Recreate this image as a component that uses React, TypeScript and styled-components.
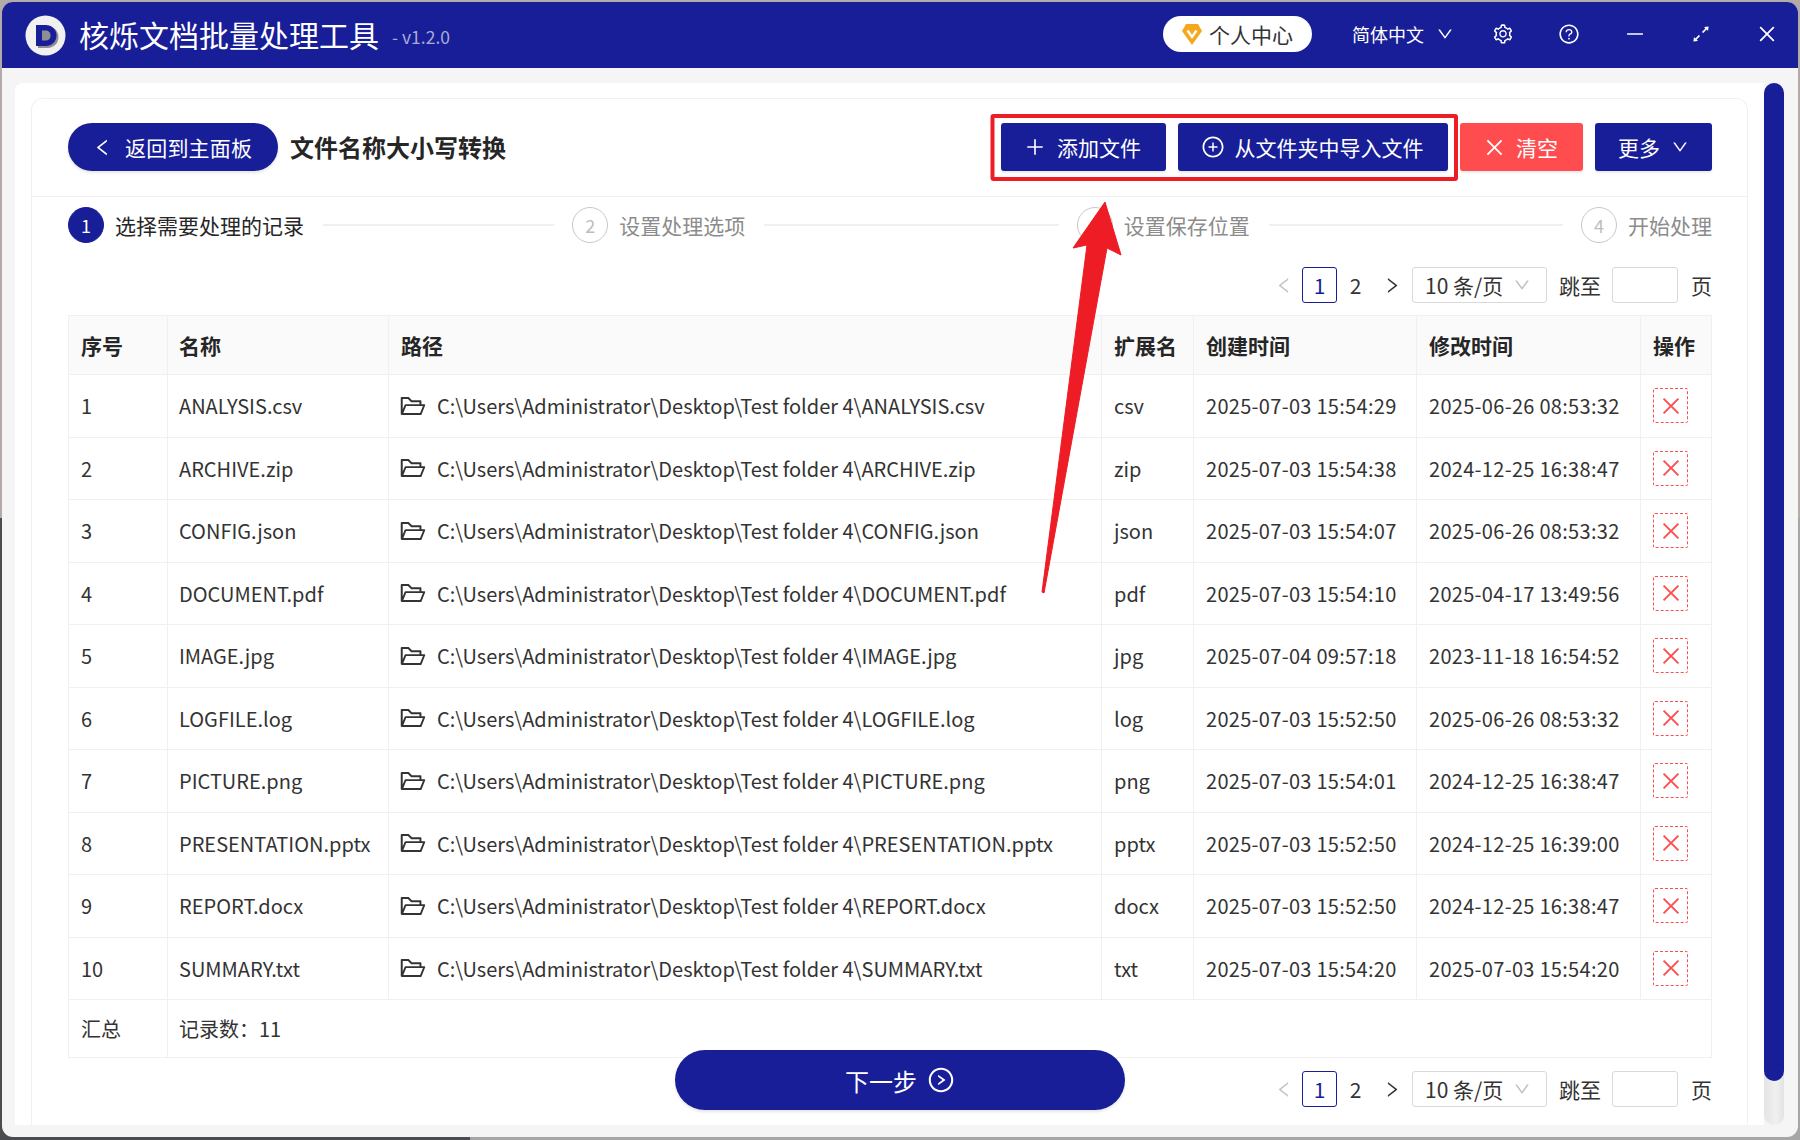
import React from "react";
import styled, { createGlobalStyle } from "styled-components";
import {
  AiOutlineArrowsAlt,
  AiOutlineClose,
  AiOutlineDown,
  AiOutlineFolderOpen,
  AiOutlineLeft,
  AiOutlineMinus,
  AiOutlinePlus,
  AiOutlinePlusCircle,
  AiOutlineQuestionCircle,
  AiOutlineRight,
  AiOutlineRightCircle,
  AiOutlineSetting,
} from "react-icons/ai";

const BLUE = "#181e97";
const LINE = "#f0f0f0";
const FONT = `"Noto Sans CJK SC", "Noto Sans", sans-serif`;

const Global = createGlobalStyle`
  html, body { margin: 0; padding: 0; }
  body {
    width: 1800px;
    height: 1140px;
    overflow: hidden;
    font-family: ${FONT};
    background:
      linear-gradient(90deg, #4a4c50 0 470px, #a6a6a6 470px) 0 518px / 100% 622px no-repeat,
      #b4aaa8;
  }
  * { box-sizing: border-box; }
`;

const Page = styled.div`
  position: relative;
  width: 1800px;
  height: 1140px;
  padding: 2px;
`;

const AppWindow = styled.div`
  width: 1796px;
  height: 1135px;
  border-radius: 11px;
  overflow: hidden;
  background: #f5f5f5;
  display: flex;
  flex-direction: column;
`;

const TitleBar = styled.header`
  height: 66px;
  flex: none;
  background: ${BLUE};
  color: #fff;
  display: flex;
  align-items: center;
  padding-left: 23px;
  padding-bottom: 2px;
`;

const Logo = styled.svg`
  width: 41px;
  height: 41px;
  flex: none;
  margin-top: 2px;
`;

const AppName = styled.div`
  margin-left: 13px;
  font-size: 30px;
  line-height: 40px;
  letter-spacing: 0;
  color: #fff;
`;

const Version = styled.div`
  margin-left: 13px;
  margin-top: 4px;
  font-size: 17.5px;
  color: #a9acd6;
`;

const Pill = styled.div`
  margin-left: auto;
  width: 149px;
  height: 36px;
  border-radius: 18px;
  background: #fff;
  color: #333;
  display: flex;
  align-items: center;
  padding-left: 19px;
  gap: 7px;
  font-size: 21px;
  line-height: 36px;
`;

const Lang = styled.div`
  margin-left: 40px;
  margin-right: 16px;
  display: flex;
  align-items: center;
  gap: 12px;
  font-size: 18px;
  color: #fff;
`;

const WinIcon = styled.div`
  width: 66px;
  height: 40px;
  display: flex;
  align-items: center;
  justify-content: center;
  font-size: 22px;
`;

const WinIcons = styled.div`
  display: flex;
  margin-right: -2px;
`;

const Body = styled.div`
  flex: 1;
  display: flex;
  padding: 15px 14px 12px 13px;
  min-height: 0;
`;

const Panel = styled.main`
  flex: 1;
  background: #fff;
  padding: 15px 16px 0;
  border-radius: 8px 0 0 0;
  min-width: 0;
`;

const ScrollTrack = styled.div`
  width: 20px;
  flex: none;
  border-radius: 10px;
  background: linear-gradient(90deg, #e4e4e4, #f0f0f0 60%, #e2e2e2);
`;

const ScrollThumb = styled.div`
  height: 998px;
  border-radius: 10px;
  background: ${BLUE};
`;

const Card = styled.section`
  height: 100%;
  border: 1px solid ${LINE};
  border-bottom: 0;
  border-radius: 12px 12px 0 0;
  display: flex;
  flex-direction: column;
`;

const Head = styled.div`
  height: 98px;
  flex: none;
  border-bottom: 1px solid ${LINE};
  display: flex;
  align-items: flex-start;
  padding: 24px 35px 0 36px;
`;

const BackButton = styled.button`
  width: 210px;
  height: 48px;
  border: 0;
  border-radius: 24px;
  background: ${BLUE};
  color: #fff;
  font-family: inherit;
  font-size: 21px;
  letter-spacing: 0.2px;
  display: flex;
  align-items: center;
  padding: 0 0 0 24px;
  gap: 12px;
  box-shadow: 0 2px 3px rgba(0, 0, 0, 0.1);
`;

const PageTitle = styled.h1`
  margin: 0 0 0 12px;
  font-size: 24px;
  line-height: 48px;
  font-weight: 700;
  color: #262626;
`;

const Toolbar = styled.div`
  margin-left: auto;
  display: flex;
  gap: 12px;
`;

const ToolButton = styled.button<{ $w: number; $danger?: boolean; $gap?: number; $nudge?: boolean }>`
  width: ${(p) => p.$w}px;
  height: 48px;
  border: 0;
  border-radius: 3px;
  background: ${(p) => (p.$danger ? "#ff4d4f" : BLUE)};
  color: #fff;
  font-family: inherit;
  font-size: 21px;
  display: flex;
  align-items: center;
  justify-content: center;
  gap: ${(p) => p.$gap ?? 12}px;
  padding: 0 ${(p) => (p.$nudge ? 2 : 0)}px 0 0;
  box-shadow: 0 2px 2px rgba(0, 0, 0, 0.08);
`;

const Content = styled.div`
  flex: 1;
  padding: 10px 35px 0 36px;
  display: flex;
  flex-direction: column;
`;

const Steps = styled.ol`
  list-style: none;
  margin: 0;
  padding: 0;
  display: flex;
  height: 36px;
  flex: none;
`;

const Step = styled.li<{ $last?: boolean }>`
  flex: ${(p) => (p.$last ? "none" : 1)};
  display: flex;
  align-items: center;
`;

const StepCircle = styled.div<{ $active?: boolean }>`
  width: 36px;
  height: 36px;
  border-radius: 50%;
  flex: none;
  display: flex;
  align-items: center;
  justify-content: center;
  font-size: 18px;
  border: 1px solid ${(p) => (p.$active ? BLUE : "#c8c8c8")};
  background: ${(p) => (p.$active ? BLUE : "#fff")};
  color: ${(p) => (p.$active ? "#fff" : "#bdbdbd")};
`;

const StepLabel = styled.div<{ $active?: boolean }>`
  margin-left: 11px;
  font-size: 21px;
  white-space: nowrap;
  color: ${(p) => (p.$active ? "#262626" : "#8c8c8c")};
`;

const StepLine = styled.div`
  flex: 1;
  height: 2px;
  margin: 0 18px 0 19px;
  background: ${LINE};
`;

const Pager = styled.nav`
  display: flex;
  align-items: center;
  justify-content: flex-end;
  height: 36px;
  font-size: 21px;
  color: #333;
`;

const TopPager = styled(Pager)`
  margin-top: 24px;
  flex: none;
`;

const PageArrow = styled.div<{ $off?: boolean; $after?: boolean }>`
  width: 20px;
  margin-left: ${(p) => (p.$after ? 9 : 0)}px;
  display: flex;
  justify-content: center;
  font-size: 21px;
  color: ${(p) => (p.$off ? "#c4c4c4" : "#333")};
`;

const PageNum = styled.div<{ $on?: boolean }>`
  width: 35px;
  height: 36px;
  margin-left: ${(p) => (p.$on ? 8 : 1)}px;
  border-radius: 3px;
  border: 1px solid ${(p) => (p.$on ? BLUE : "transparent")};
  display: flex;
  align-items: center;
  justify-content: center;
  font-size: 21px;
  color: ${(p) => (p.$on ? BLUE : "#333")};
`;

const SizeSelect = styled.div`
  width: 135px;
  height: 36px;
  margin-left: 10px;
  border: 1px solid #d9d9d9;
  border-radius: 3px;
  display: flex;
  align-items: center;
  justify-content: space-between;
  padding: 0 15px 0 12px;
  font-size: 21px;
  color: #333;
  svg {
    color: #bfbfbf;
    font-size: 18px;
  }
`;

const JumpLabel = styled.div`
  margin: 0 11px 0 12px;
  font-size: 21px;
`;

const JumpInput = styled.div`
  width: 66px;
  height: 36px;
  border: 1px solid #d9d9d9;
  border-radius: 3px;
`;

const PageWord = styled.div`
  margin-left: 13px;
  font-size: 21px;
`;

const Table = styled.table`
  margin-top: 12px;
  width: 1644px;
  table-layout: fixed;
  border-collapse: separate;
  border-spacing: 0;
  border-top: 1px solid ${LINE};
  border-left: 1px solid ${LINE};
  font-size: 20px;
  color: #333;
  flex: none;
`;

const Th = styled.th<{ $tight?: boolean }>`
  height: 59px;
  padding: 0 0 0 ${(p) => (p.$tight ? 11 : 12)}px;
  background: #fafafa;
  text-align: left;
  font-weight: 700;
  font-size: 21px;
  color: #262626;
  border-right: 1px solid ${LINE};
  border-bottom: 1px solid ${LINE};
  white-space: nowrap;
`;

const Td = styled.td<{ $tight?: boolean }>`
  height: 62.5px;
  padding: 0 0 0 ${(p) => (p.$tight ? 11 : 12)}px;
  border-right: 1px solid ${LINE};
  border-bottom: 1px solid ${LINE};
  white-space: nowrap;
`;

const DateCell = styled(Td)`
  letter-spacing: 0.3px;
`;

const SummaryCell = styled(Td)`
  height: 58px;
`;

const PathCell = styled.div`
  display: flex;
  align-items: center;
  gap: 10px;
  margin-left: -2px;
  svg {
    font-size: 28px;
    color: #333;
    flex: none;
  }
`;

const DeleteButton = styled.div`
  width: 35px;
  height: 35px;
  border: 1px dashed #ff4d4f;
  border-radius: 2px;
  color: #ff4d4f;
  display: flex;
  align-items: center;
  justify-content: center;
  font-size: 24px;
`;

const Footer = styled.div`
  position: relative;
  margin-top: 13px;
`;

const NextButton = styled.button`
  position: absolute;
  left: 607px;
  top: -21px;
  width: 450px;
  height: 60px;
  border: 0;
  border-radius: 30px;
  background: ${BLUE};
  color: #fff;
  font-family: inherit;
  font-size: 24px;
  display: flex;
  align-items: center;
  justify-content: center;
  gap: 10px;
  box-shadow: 0 2px 3px rgba(0, 0, 0, 0.1);
  svg {
    font-size: 28px;
  }
`;

const Annotation = styled.svg`
  position: absolute;
  left: 0;
  top: 0;
  pointer-events: none;
`;

const rows = [
  ["ANALYSIS.csv", "csv", "2025-07-03 15:54:29", "2025-06-26 08:53:32"],
  ["ARCHIVE.zip", "zip", "2025-07-03 15:54:38", "2024-12-25 16:38:47"],
  ["CONFIG.json", "json", "2025-07-03 15:54:07", "2025-06-26 08:53:32"],
  ["DOCUMENT.pdf", "pdf", "2025-07-03 15:54:10", "2025-04-17 13:49:56"],
  ["IMAGE.jpg", "jpg", "2025-07-04 09:57:18", "2023-11-18 16:54:52"],
  ["LOGFILE.log", "log", "2025-07-03 15:52:50", "2025-06-26 08:53:32"],
  ["PICTURE.png", "png", "2025-07-03 15:54:01", "2024-12-25 16:38:47"],
  ["PRESENTATION.pptx", "pptx", "2025-07-03 15:52:50", "2024-12-25 16:39:00"],
  ["REPORT.docx", "docx", "2025-07-03 15:52:50", "2024-12-25 16:38:47"],
  ["SUMMARY.txt", "txt", "2025-07-03 15:54:20", "2025-07-03 15:54:20"],
];

const colWidths = [99, 221, 713, 92, 223, 224, 71];
const stepNames = ["选择需要处理的记录", "设置处理选项", "设置保存位置", "开始处理"];

function PagerBar({ Comp }: { Comp: typeof Pager }) {
  return (
    <Comp>
      <PageArrow $off>
        <AiOutlineLeft />
      </PageArrow>
      <PageNum $on>1</PageNum>
      <PageNum>2</PageNum>
      <PageArrow $after>
        <AiOutlineRight />
      </PageArrow>
      <SizeSelect>
        10 条/页
        <AiOutlineDown />
      </SizeSelect>
      <JumpLabel>跳至</JumpLabel>
      <JumpInput />
      <PageWord>页</PageWord>
    </Comp>
  );
}

export default function App() {
  return (
    <Page>
      <Global />
      <AppWindow>
        <TitleBar>
          <Logo viewBox="0 0 41 41">
            <circle cx="20.5" cy="20.5" r="20" fill="#f1f1f1" />
            <path
              d="M12 10h9.5c6.5 0 11 4.4 11 10.6S28 31.5 21.5 31.5H12z"
              fill="#8e8e96"
              transform="translate(1 1.4)"
            />
            <path
              fillRule="evenodd"
              d="M11 10h9.5c6.5 0 11 4.4 11 10.5S27 31 20.5 31H11zM17 15.4v10.2h3.4c3.2 0 5.2-2 5.2-5.1s-2-5.1-5.2-5.1z"
              fill={BLUE}
            />
          </Logo>
          <AppName>核烁文档批量处理工具</AppName>
          <Version>- v1.2.0</Version>
          <Pill>
            <svg width="20" height="24" viewBox="0 0 20 24">
              <path d="M4 2h12l4 7-10 14L0 9z" fill="#f5a81c" />
              <path d="M5.5 8.5 10 15l4.5-6.5" fill="none" stroke="#fff" strokeWidth="2.4" />
            </svg>
            个人中心
          </Pill>
          <Lang>
            简体中文
            <AiOutlineDown size={18} />
          </Lang>
          <WinIcons>
            <WinIcon><AiOutlineSetting /></WinIcon>
            <WinIcon><AiOutlineQuestionCircle /></WinIcon>
            <WinIcon><AiOutlineMinus /></WinIcon>
            <WinIcon><AiOutlineArrowsAlt /></WinIcon>
            <WinIcon><AiOutlineClose /></WinIcon>
          </WinIcons>
        </TitleBar>
        <Body>
          <Panel>
            <Card>
              <Head>
                <BackButton>
                  <AiOutlineLeft size={21} />
                  返回到主面板
                </BackButton>
                <PageTitle>文件名称大小写转换</PageTitle>
                <Toolbar>
                  <ToolButton $w={165} $gap={11} $nudge>
                    <AiOutlinePlus size={22} />
                    添加文件
                  </ToolButton>
                  <ToolButton $w={270} $gap={10} $nudge>
                    <AiOutlinePlusCircle size={24} />
                    从文件夹中导入文件
                  </ToolButton>
                  <ToolButton $w={123} $danger $gap={10} $nudge>
                    <AiOutlineClose size={23} />
                    清空
                  </ToolButton>
                  <ToolButton $w={117} $gap={11}>
                    更多
                    <AiOutlineDown size={18} />
                  </ToolButton>
                </Toolbar>
              </Head>
              <Content>
                <Steps>
                  {stepNames.map((name, i) => (
                    <Step key={name} $last={i === 3}>
                      <StepCircle $active={i === 0}>{i + 1}</StepCircle>
                      <StepLabel $active={i === 0}>{name}</StepLabel>
                      {i < 3 && <StepLine />}
                    </Step>
                  ))}
                </Steps>
                <PagerBar Comp={TopPager} />
                <Table>
                  <colgroup>
                    {colWidths.map((w, i) => (
                      <col key={i} style={{ width: w }} />
                    ))}
                  </colgroup>
                  <thead>
                    <tr>
                      {["序号", "名称", "路径", "扩展名", "创建时间", "修改时间", "操作"].map((h, i) => (
                        <Th key={h} $tight={i === 1}>{h}</Th>
                      ))}
                    </tr>
                  </thead>
                  <tbody>
                    {rows.map((r, i) => (
                      <tr key={r[0]}>
                        <Td>{i + 1}</Td>
                        <Td $tight>{r[0]}</Td>
                        <Td>
                          <PathCell>
                            <AiOutlineFolderOpen />
                            {`C:\\Users\\Administrator\\Desktop\\Test folder 4\\${r[0]}`}
                          </PathCell>
                        </Td>
                        <Td>{r[1]}</Td>
                        <DateCell>{r[2]}</DateCell>
                        <DateCell>{r[3]}</DateCell>
                        <Td>
                          <DeleteButton>
                            <AiOutlineClose />
                          </DeleteButton>
                        </Td>
                      </tr>
                    ))}
                    <tr>
                      <SummaryCell>汇总</SummaryCell>
                      <SummaryCell $tight colSpan={6}>记录数：11</SummaryCell>
                    </tr>
                  </tbody>
                </Table>
                <Footer>
                  <NextButton>
                    下一步
                    <AiOutlineRightCircle />
                  </NextButton>
                  <PagerBar Comp={Pager} />
                </Footer>
              </Content>
            </Card>
          </Panel>
          <ScrollTrack>
            <ScrollThumb />
          </ScrollTrack>
        </Body>
      </AppWindow>
      <Annotation width="1800" height="1140" viewBox="0 0 1800 1140">
        <rect x="992.5" y="116" width="463.5" height="63" rx="1" fill="none" stroke="#ee1c25" strokeWidth="4" />
        <path
          d="M1105 202 1121 255 1107 248 1044 593 1042 592 1087 245 1073 248z"
          fill="#ee1c25"
          stroke="#ee1c25"
          strokeWidth="1"
          strokeLinejoin="round"
        />
      </Annotation>
    </Page>
  );
}
